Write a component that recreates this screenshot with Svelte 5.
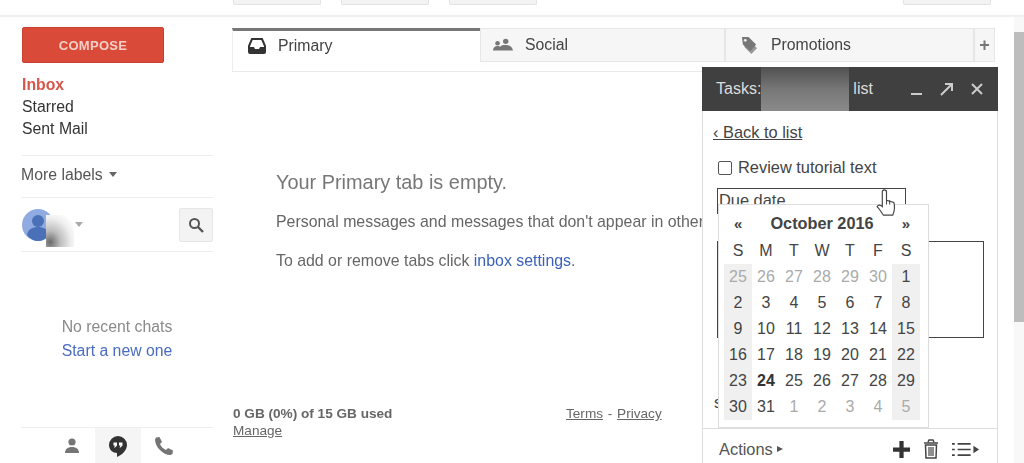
<script>
  const weeks = [
    [25, 26, 27, 28, 29, 30, 1],
    [2, 3, 4, 5, 6, 7, 8],
    [9, 10, 11, 12, 13, 14, 15],
    [16, 17, 18, 19, 20, 21, 22],
    [23, 24, 25, 26, 27, 28, 29],
    [30, 31, 1, 2, 3, 4, 5]
  ];

  // first and last rows spill into the neighbouring months
  const isOther = (row, day) => (row === 0 && day > 7) || (row === 5 && day < 7);
</script>

<div class="page">
  <header class="topbar">
    <div class="top-left">
      <span class="top-btn"></span>
      <span class="top-btn"></span>
      <span class="top-btn"></span>
    </div>
    <span class="top-btn b4"></span>
  </header>

  <div class="body">
    <aside class="side">
      <button class="compose">COMPOSE</button>
      <nav class="labels">
        <span class="inbox">Inbox</span>
        <span>Starred</span>
        <span>Sent Mail</span>
      </nav>
      <div class="more">More labels <i class="caret"></i></div>
      <div class="me">
        <div class="avatar">
          <svg viewBox="0 0 32 32" width="32" height="32">
            <circle cx="16" cy="16" r="16" fill="#8fabe2" />
            <circle cx="16" cy="12" r="6" fill="#4a70b8" />
            <path d="M5 26c1-6 6-8 11-8s10 2 11 8c-3 4-7 6-11 6s-8-2-11-6z" fill="#4a70b8" />
          </svg>
          <span class="smear"></span>
        </div>
        <i class="caret small"></i>
        <span class="search">
          <svg viewBox="0 0 16 16" width="16" height="16">
            <circle cx="6.5" cy="6.5" r="4.5" fill="none" stroke="#555" stroke-width="2" />
            <path d="M10 10l5 5" stroke="#555" stroke-width="2.4" />
          </svg>
        </span>
      </div>
      <div class="chats">
        <div class="none">No recent chats</div>
        <div class="start">Start a new one</div>
      </div>
      <div class="chat-tabs">
        <span class="ctab">
          <svg viewBox="0 0 18 18" width="18" height="18">
            <circle cx="9" cy="5" r="3.6" fill="#757575" />
            <path d="M2 16c0-4 3-6 7-6s7 2 7 6z" fill="#757575" />
          </svg>
        </span>
        <span class="ctab on">
          <svg viewBox="0 0 20 22" width="20" height="22">
            <path d="M10 1a9 9 0 0 0-9 9c0 5 4 8 8 8v4c5-2 10-7 10-12a9 9 0 0 0-9-9z" fill="#333" />
            <path d="M5.5 7.5h3.500v3l-2 2h-1l1-2h-1.500zM11 7.500h3.500v3l-2 2h-1l1-2h-1.500z" fill="#fff" />
          </svg>
        </span>
        <span class="ctab">
          <svg viewBox="0 0 20 20" width="20" height="20">
            <path d="M2 1.500l3.500-.5 2.500 5-2 2c1 2.500 3 4.500 6 6l2-2 5 2.500-.5 3.500-2 1C9 19 1 11 1 3.500z" fill="#757575" />
          </svg>
        </span>
      </div>
    </aside>

    <main class="main">
      <div class="tabs">
        <div class="tab active">
          <svg viewBox="0 0 18 16" width="18" height="16">
            <path d="M4 1h10l3 7v6a1 1 0 0 1-1 1H2a1 1 0 0 1-1-1V8z" fill="none" stroke="#333" stroke-width="2" />
            <path d="M1 9h5l1 2h4l1-2h5v5a1 1 0 0 1-1 1H2a1 1 0 0 1-1-1z" fill="#333" />
          </svg>
          Primary
        </div>
        <div class="tab social">
          <svg viewBox="0 0 22 14" width="20" height="14">
            <circle cx="5" cy="5" r="2.500" fill="#777" />
            <circle cx="14" cy="3" r="3" fill="#777" />
            <path d="M0 13c0-3 2-5 5-5 1 0 2 0 3 1 1-2 3-2 6-2s7 1 8 6z" fill="#777" />
          </svg>
          Social
        </div>
        <div class="tab promo">
          <svg viewBox="0 0 18 20" width="17" height="19">
            <path d="M2 5l2 7 7 7 6-6-7-8z" fill="#999" />
            <path d="M1 1h7l8 8-6 7-8-7z" fill="#777" />
            <circle cx="4.500" cy="4.500" r="1.500" fill="#eee" />
          </svg>
          Promotions
        </div>
        <div class="tab plus">+</div>
      </div>
      <div class="empty">
        <h2>Your Primary tab is empty.</h2>
        <p>Personal messages and messages that don't appear in other</p>
        <p>To add or remove tabs click <span class="link">inbox settings</span>.</p>
      </div>
      <footer class="foot">
        <div class="quota">
          <b>0 GB (0%) of 15 GB used</b>
          <u>Manage</u>
        </div>
        <div class="terms"><u>Terms</u> - <u>Privacy</u></div>
      </footer>
    </main>

    <div class="scrollbar"><span class="thumb"></span></div>
  </div>

  <section class="tasks">
    <div class="task-head">
      <span class="task-title">Tasks:<span class="blurred"></span>list</span>
      <span class="task-ctrl">
        <svg viewBox="0 0 14 14" width="14" height="14"><path d="M1 12h11" stroke="#ccc" stroke-width="2" /></svg>
        <svg viewBox="0 0 14 14" width="14" height="14"><path d="M1 13L12 2M5 2h7v7" fill="none" stroke="#ccc" stroke-width="2" /></svg>
        <svg viewBox="0 0 14 14" width="14" height="14"><path d="M2 2l10 10M12 2L2 12" stroke="#ccc" stroke-width="2" /></svg>
      </span>
    </div>
    <div class="task-body">
      <u class="back">‹ Back to list</u>
      <label class="check"><span class="box"></span>Review tutorial text</label>
      <div class="due">Due date</div>
      <div class="notes"></div>
      <span class="stub">s</span>
    </div>
    <div class="task-foot">
      <span class="actions">Actions <i class="tri"></i></span>
      <svg viewBox="0 0 16 16" width="17" height="17"><path d="M6 0h4v6h6v4h-6v6H6v-6H0V6h6z" fill="#333" /></svg>
      <svg viewBox="0 0 16 20" width="16" height="20">
        <path d="M1 4h14M5 3l1-2h4l1 2" fill="none" stroke="#444" stroke-width="1.500" />
        <path d="M2.500 6h11l-.5 13H3z" fill="none" stroke="#444" stroke-width="1.500" />
        <path d="M6 8v9M8 8v9M10 8v9" stroke="#444" stroke-width="1.200" />
      </svg>
      <svg viewBox="0 0 30 16" width="28" height="15">
        <path d="M0 2h3M0 8h3M0 14h3M6 2h14M6 8h14M6 14h14" stroke="#444" stroke-width="1.800" />
        <path d="M23 4l6 4-6 4z" fill="#444" />
      </svg>
    </div>

    <div class="calendar">
      <div class="cal-head">
        <span class="nav">«</span>
        <b>October 2016</b>
        <span class="nav">»</span>
      </div>
      <div class="cal-grid">
        {#each ['S', 'M', 'T', 'W', 'T', 'F', 'S'] as d}
          <span class="dow">{d}</span>
        {/each}
        {#each weeks as week, r}
          {#each week as day, c}
            <span
              class="day"
              class:weekend={c === 0 || c === 6}
              class:other={isOther(r, day)}
              class:today={r === 4 && c === 1}>{day}</span>
          {/each}
        {/each}
      </div>
    </div>

    <svg class="hand" viewBox="0 0 20 28" width="21" height="31">
      <path d="M6 16V3a2 2 0 0 1 4 0v8l7 2c1 3 1 7-1 12H7c-2-3-4-6-6-8 1-2 3-2 5 0z" fill="#fff" stroke="#444" stroke-width="1.100" />
      <path d="M10 10v5M13 11v4" stroke="#444" stroke-width="1" />
    </svg>
  </section>
</div>

<style>
  :global(body) {
    margin: 0;
    background: #fff;
    font-family: "Liberation Sans", Arial, sans-serif;
    color: #444;
    overflow: hidden;
  }

  .page {
    position: relative;
    width: 1024px;
    height: 463px;
    overflow: hidden;
    filter: blur(0.4px);
  }

  .topbar {
    display: flex;
    justify-content: space-between;
    height: 15px;
    padding: 0 33px 0 233px;
    border-bottom: 2px solid #f0f0f0;
    box-sizing: content-box;
  }

  .top-left {
    display: flex;
    gap: 20px;
  }

  .top-btn {
    display: block;
    width: 86px;
    height: 4px;
    background: #f3f3f3;
    border: 1px solid #e2e2e2;
    border-top: 0;
    border-radius: 0 0 2px 2px;
  }

  .body {
    display: flex;
    height: 446px;
  }

  /* sidebar */
  .side {
    display: flex;
    flex-direction: column;
    width: 192px;
    margin-left: 21px;
    flex: none;
    font-size: 15.800px;
  }

  .compose {
    width: 142px;
    height: 36px;
    margin: 10px 0 0 1px;
    padding: 0;
    border: 1px solid #c9402e;
    border-radius: 2px;
    background: #d94a38;
    color: #f4cfc8;
    font: bold 13px "Liberation Sans", Arial, sans-serif;
    letter-spacing: 0.3px;
  }

  .labels {
    display: flex;
    flex-direction: column;
    gap: 4px;
    margin: 13px 0 0 1px;
    padding-bottom: 17px;
    line-height: 18px;
    color: #333;
    border-bottom: 1px solid #eee;
  }

  .inbox {
    color: #d4574a;
    font-weight: bold;
  }

  .more {
    display: flex;
    align-items: center;
    gap: 6px;
    height: 37px;
    padding-bottom: 4px;
    border-bottom: 1px solid #eee;
    color: #555;
  }

  .caret {
    width: 0;
    height: 0;
    border: 4px solid transparent;
    border-top: 5px solid #666;
    border-bottom: 0;
  }

  .caret.small {
    margin-left: 21px;
    border-top-color: #aaa;
  }

  .me {
    display: flex;
    align-items: center;
    height: 53px;
    border-bottom: 1px solid #eee;
  }

  .avatar {
    position: relative;
    width: 32px;
    height: 32px;
    margin-left: 1px;
  }

  .smear {
    position: absolute;
    left: 24px;
    top: 6px;
    width: 28px;
    height: 32px;
    background: radial-gradient(ellipse at 15% 85%, #6a6a6a 0, #bdbdbd 30%, #eee 62%, #fff 85%);
  }

  .search {
    display: grid;
    place-items: center;
    width: 34px;
    height: 34px;
    margin-left: auto;
    background: #f3f3f3;
    border: 1px solid #e6e6e6;
    border-radius: 2px;
    box-sizing: border-box;
  }

  .chats {
    flex: 1;
    padding-top: 63px;
    text-align: center;
    line-height: 24px;
  }

  .none {
    color: #8a8a8a;
  }

  .start {
    color: #4a6cc0;
  }

  .chat-tabs {
    display: flex;
    height: 35px;
    padding-left: 28px;
    border-top: 1px solid #eee;
  }

  .ctab {
    display: grid;
    place-items: center;
    width: 46px;
    height: 35px;
  }

  .ctab.on {
    background: #f5f5f5;
  }

  /* main column */
  .main {
    display: flex;
    flex-direction: column;
    flex: 1;
    min-width: 0;
    margin-left: 19px;
  }

  .tabs {
    display: flex;
    height: 34px;
    margin: 11px 19px 0 0;
    padding-bottom: 9px;
    border-bottom: 1px solid #e8e8e8;
    font-size: 15.800px;
  }

  .tab {
    display: flex;
    align-items: center;
    gap: 12px;
    box-sizing: border-box;
    width: 245px;
    padding-left: 12px;
    background: #f6f6f6;
    border: 1px solid #e6e6e6;
    color: #444;
  }

  .tab.active {
    width: 248px;
    height: 43px;
    padding-left: 15px;
    padding-bottom: 11px;
    background: #fff;
    border: 0;
    border-left: 1px solid #eee;
    border-top: 3px solid #777;
  }

  .tab.promo {
    width: 249px;
    padding-left: 15px;
    gap: 13px;
  }

  .tab.plus {
    flex: 1;
    width: auto;
    padding: 0;
    justify-content: center;
    font-weight: bold;
    font-size: 18px;
    color: #777;
  }

  .empty {
    flex: 1;
    padding: 99px 0 0 44px;
    overflow: hidden;
    white-space: nowrap;
    font-size: 15.900px;
    color: #666;
  }

  .empty h2 {
    margin: 0 0 20px;
    font-size: 19.900px;
    font-weight: normal;
    color: #777;
    line-height: 22px;
  }

  .empty p {
    margin: 0 0 22px;
    line-height: 17px;
  }

  .link {
    color: #3a62b8;
  }

  .foot {
    display: flex;
    height: 58px;
    padding: 5px 0 0 1px;
    font-size: 13.600px;
    line-height: 17px;
    color: #666;
  }

  .quota {
    display: flex;
    flex-direction: column;
    width: 333px;
  }

  .quota u {
    align-self: flex-start;
  }

  .terms {
    word-spacing: 1px;
  }

  /* scrollbar */
  .scrollbar {
    width: 10px;
    flex: none;
    padding-top: 15px;
    background: #f8f8f8;
  }

  .thumb {
    display: block;
    height: 290px;
    background: #bdbdbd;
  }

  /* tasks window */
  .tasks {
    position: absolute;
    left: 702px;
    top: 67px;
    display: flex;
    flex-direction: column;
    width: 296px;
    height: 400px;
    box-sizing: border-box;
    background: #fff;
    border: 1px solid #ddd;
    border-top: 0;
    border-bottom: 0;
    font-size: 16.400px;
  }

  .task-head {
    display: flex;
    align-items: center;
    justify-content: space-between;
    height: 44px;
    margin: 0 -1px;
    padding: 0 14px;
    background: #404040;
    color: #ddd;
    flex: none;
  }

  .task-title {
    display: flex;
    align-items: center;
    font-size: 16px;
    font-weight: normal;
  }

  .blurred {
    width: 88px;
    height: 44px;
    margin-right: 4px;
    background: linear-gradient(#505050, #777 50%, #8a8a8a);
  }

  .task-ctrl {
    display: flex;
    gap: 16px;
  }

  .task-body {
    position: relative;
    flex: 1;
    padding: 12px 10px 0;
  }

  .back {
    display: block;
    line-height: 18px;
    color: #444;
  }

  .check {
    display: flex;
    align-items: center;
    gap: 6px;
    margin: 17px 0 0 5px;
    line-height: 18px;
    color: #444;
  }

  .box {
    width: 12px;
    height: 12px;
    border: 1.500px solid #555;
    border-radius: 2px;
    margin-top: 2px;
  }

  .due {
    box-sizing: border-box;
    width: 189px;
    height: 26px;
    margin: 12px 0 0 4px;
    padding: 2px 1px;
    border: 1px solid #444;
    color: #444;
  }

  .notes {
    box-sizing: border-box;
    width: 267px;
    height: 97px;
    margin: 27px 0 0 4px;
    border: 1.500px solid #444;
  }

  .stub {
    position: absolute;
    left: 11px;
    top: 282px;
  }

  .task-foot {
    display: flex;
    align-items: center;
    gap: 13px;
    height: 39px;
    padding: 2px 17px 0 16px;
    box-sizing: border-box;
    border-top: 1px solid #ddd;
    flex: none;
  }

  .actions {
    display: flex;
    align-items: center;
    gap: 4px;
    margin-right: auto;
    color: #555;
  }

  .tri {
    width: 0;
    height: 0;
    border: 3.500px solid transparent;
    border-left: 6px solid #555;
    border-right: 0;
  }

  .calendar {
    position: absolute;
    left: 15px;
    top: 137px;
    box-sizing: border-box;
    width: 211px;
    height: 224px;
    padding: 6px 5px 0;
    background: #fff;
    border: 1px solid #ddd;
  }

  .cal-head {
    display: flex;
    justify-content: space-between;
    align-items: center;
    height: 27px;
    padding: 0 13px 2px 10px;
    box-sizing: border-box;
    color: #444;
  }

  .cal-head b {
    font-size: 16.300px;
  }

  .nav {
    font-weight: bold;
    font-size: 15px;
  }

  .cal-grid {
    display: grid;
    grid-template-columns: repeat(7, 28px);
    grid-auto-rows: 26px;
    text-align: center;
    line-height: 26px;
    font-size: 16px;
    color: #444;
  }

  .weekend {
    background: #f0f0f0;
  }

  .other {
    color: #aaa;
  }

  .today {
    font-weight: bold;
    color: #333;
  }

  .hand {
    position: absolute;
    left: 173px;
    top: 121px;
  }
</style>
